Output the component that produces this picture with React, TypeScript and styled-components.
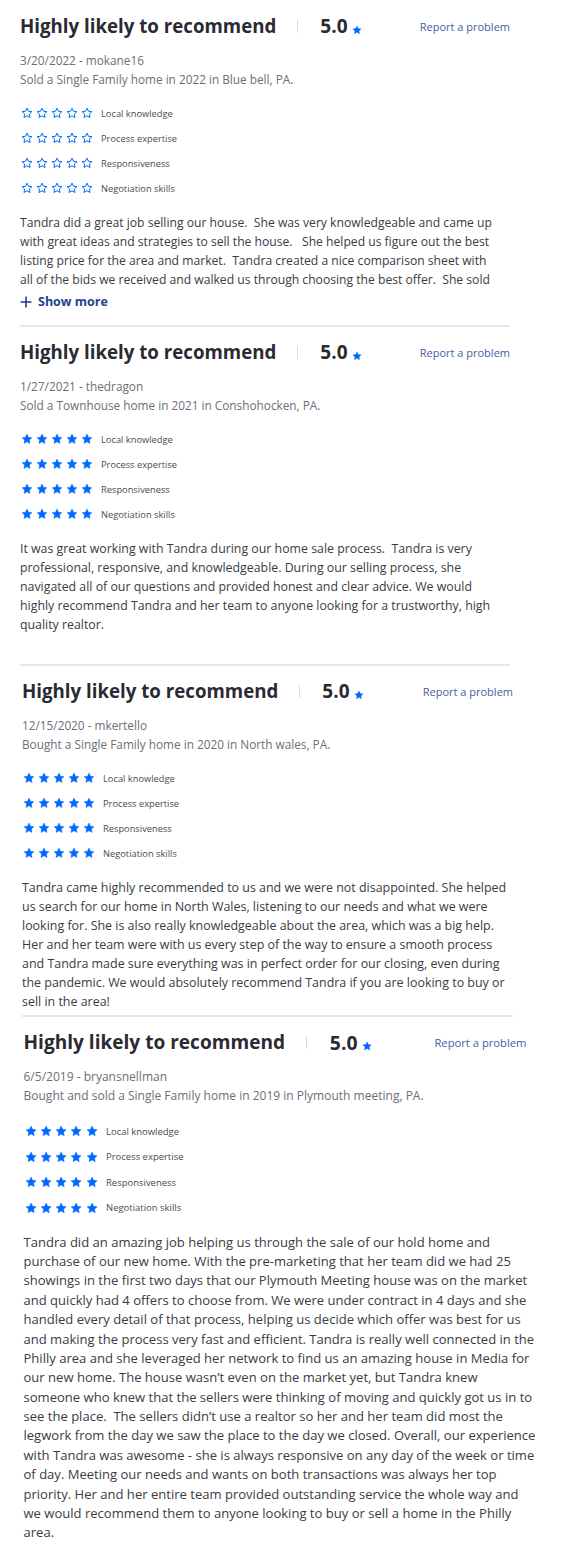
import React from 'react';
import styled, { createGlobalStyle } from 'styled-components';

const GlobalStyle = createGlobalStyle`
  body {
    margin: 0;
    background: #fff;
    font-family: "Open Sans", "Liberation Sans", sans-serif;
  }
`;

const Page = styled.main`
  display: flex;
  flex-direction: column;
`;

const Review = styled.article<{ $left: number; $width: number; $scale: number; $top: number; $bottom: number; $last?: boolean }>`
  --s: ${(p) => p.$scale};
  margin-left: ${(p) => p.$left}px;
  width: ${(p) => p.$width}px;
  padding-top: calc(${(p) => p.$top}px * var(--s));
  padding-bottom: ${(p) => p.$bottom}px;
  border-bottom: ${(p) => (p.$last ? 'none' : '2px solid #e8e8e8')};
  color: #2a2a33;
`;

const Header = styled.header`
  display: flex;
  align-items: center;
  height: calc(28px * var(--s));
`;

const Title = styled.h2`
  margin: 0;
  font-size: calc(18.7px * var(--s));
  font-weight: 700;
  line-height: 1;
  color: #2a2a33;
`;

const Sep = styled.span`
  width: 1px;
  height: calc(13px * var(--s));
  background: #dcdcdc;
  margin: 0 calc(22px * var(--s)) 0 calc(21px * var(--s));
`;

const Score = styled.span`
  display: flex;
  align-items: center;
  gap: calc(4px * var(--s));
  font-size: calc(19px * var(--s));
  font-weight: 700;
  line-height: 1;

  svg {
    margin-top: calc(8px * var(--s));
  }
`;

const ReportLink = styled.a`
  margin-left: auto;
  font-size: calc(11px * var(--s));
  color: #4a5ca5;
  text-decoration: none;
  cursor: pointer;
`;

const Meta = styled.div`
  margin-top: calc(11px * var(--s));
  font-size: calc(11.8px * var(--s));
  line-height: calc(18.5px * var(--s));
  color: #6e6e78;
`;

const Ratings = styled.ul`
  list-style: none;
  margin: calc(12.5px * var(--s)) 0 0;
  padding: 0;
`;

const RatingRow = styled.li`
  display: flex;
  align-items: center;
  height: calc(25px * var(--s));
`;

const Stars = styled.span`
  display: flex;
  gap: calc(3px * var(--s));
  margin: 0 calc(8px * var(--s)) 0 1px;
`;

const RatingLabel = styled.span`
  font-size: calc(9.3px * var(--s));
  color: #4a4a55;
`;

const Body = styled.p<{ $size: number }>`
  margin: calc(12px * var(--s)) 0 0;
  font-size: ${(p) => p.$size}px;
  line-height: calc(19px * var(--s));
  color: #3b3b44;
  white-space: pre;
`;

const ShowMore = styled.button`
  display: flex;
  align-items: center;
  gap: 6px;
  margin-top: 4.5px;
  padding: 0;
  border: 0;
  background: none;
  font-family: inherit;
  font-size: 12.5px;
  font-weight: 700;
  line-height: 18px;
  color: #1e3f8f;
  cursor: pointer;
`;

const Star = ({ filled, size }: { filled: boolean; size: number }) => (
  <svg width={size} height={size} viewBox="0 0 24 24">
    <path
      d="M12 2.2l2.95 6.3 6.85.85-5.05 4.75 1.3 6.85L12 17.55l-6.05 3.4 1.3-6.85L2.2 9.35l6.85-.85z"
      fill={filled ? '#006aff' : 'none'}
      stroke="#006aff"
      strokeWidth={filled ? 1 : 2}
      strokeLinejoin="round"
    />
  </svg>
);

const PlusIcon = () => (
  <svg width="12" height="12" viewBox="0 0 12 12">
    <path d="M6 0.5v11M0.5 6h11" stroke="#1e3f8f" strokeWidth="1.6" />
  </svg>
);

const categories = ['Local knowledge', 'Process expertise', 'Responsiveness', 'Negotiation skills'];

// the reviews come from different captures, so each one keeps its own offset and text size
const reviews = [
  {
    date: '3/20/2022 - mokane16',
    deal: 'Sold a Single Family home in 2022 in Blue bell, PA.',
    filled: false,
    lines: [
      'Tandra did a great job selling our house.  She was very knowledgeable and came up',
      'with great ideas and strategies to sell the house.   She helped us figure out the best',
      'listing price for the area and market.  Tandra created a nice comparison sheet with',
      'all of the bids we received and walked us through choosing the best offer.  She sold',
    ],
    more: true,
    size: 12.15,
    left: 20, width: 490, scale: 1, top: 12, bottom: 14,
  },
  {
    date: '1/27/2021 - thedragon',
    deal: 'Sold a Townhouse home in 2021 in Conshohocken, PA.',
    filled: true,
    lines: [
      'It was great working with Tandra during our home sale process.  Tandra is very',
      'professional, responsive, and knowledgeable. During our selling process, she',
      'navigated all of our questions and provided honest and clear advice. We would',
      'highly recommend Tandra and her team to anyone looking for a trustworthy, high',
      'quality realtor.',
    ],
    size: 12.35,
    left: 20, width: 490, scale: 1, top: 11, bottom: 30.5,
  },
  {
    date: '12/15/2020 - mkertello',
    deal: 'Bought a Single Family home in 2020 in North wales, PA.',
    filled: true,
    lines: [
      'Tandra came highly recommended to us and we were not disappointed. She helped',
      'us search for our home in North Wales, listening to our needs and what we were',
      'looking for. She is also really knowledgeable about the area, which was a big help.',
      'Her and her team were with us every step of the way to ensure a smooth process',
      'and Tandra made sure everything was in perfect order for our closing, even during',
      'the pandemic. We would absolutely recommend Tandra if you are looking to buy or',
      'sell in the area!',
    ],
    size: 12.45,
    left: 22, width: 491, scale: 1, top: 11, bottom: 4.5,
  },
  {
    date: '6/5/2019 - bryansnellman',
    deal: 'Bought and sold a Single Family home in 2019 in Plymouth meeting, PA.',
    filled: true,
    lines: [
      'Tandra did an amazing job helping us through the sale of our hold home and',
      'purchase of our new home. With the pre-marketing that her team did we had 25',
      'showings in the first two days that our Plymouth Meeting house was on the market',
      'and quickly had 4 offers to choose from. We were under contract in 4 days and she',
      'handled every detail of that process, helping us decide which offer was best for us',
      'and making the process very fast and efficient. Tandra is really well connected in the',
      'Philly area and she leveraged her network to find us an amazing house in Media for',
      'our new home. The house wasn\u2019t even on the market yet, but Tandra knew',
      'someone who knew that the sellers were thinking of moving and quickly got us in to',
      'see the place.  The sellers didn\u2019t use a realtor so her and her team did most the',
      'legwork from the day we saw the place to the day we closed. Overall, our experience',
      'with Tandra was awesome - she is always responsive on any day of the week or time',
      'of day. Meeting our needs and wants on both transactions was always her top',
      'priority. Her and her entire team provided outstanding service the whole way and',
      'we would recommend them to anyone looking to buy or sell a home in the Philly',
      'area.',
    ],
    size: 13.05,
    left: 23.5, width: 503, scale: 1.02, top: 11, bottom: 0,
  },
];

function App() {
  return (
    <Page>
      <GlobalStyle />
      {reviews.map((r, i) => (
        <Review
          key={r.date}
          $left={r.left}
          $width={r.width}
          $scale={r.scale}
          $top={r.top}
          $bottom={r.bottom}
          $last={i === reviews.length - 1}
        >
          <Header>
            <Title>Highly likely to recommend</Title>
            <Sep />
            <Score>
              5.0
              <Star filled size={10 * r.scale} />
            </Score>
            <ReportLink>Report a problem</ReportLink>
          </Header>
          <Meta>
            <div>{r.date}</div>
            <div>{r.deal}</div>
          </Meta>
          <Ratings>
            {categories.map((c) => (
              <RatingRow key={c}>
                <Stars>
                  {[0, 1, 2, 3, 4].map((n) => (
                    <Star key={n} filled={r.filled} size={12 * r.scale} />
                  ))}
                </Stars>
                <RatingLabel>{c}</RatingLabel>
              </RatingRow>
            ))}
          </Ratings>
          <Body $size={r.size}>{r.lines.join('\n')}</Body>
          {r.more && (
            <ShowMore>
              <PlusIcon />
              Show more
            </ShowMore>
          )}
        </Review>
      ))}
    </Page>
  );
}

export default App;
